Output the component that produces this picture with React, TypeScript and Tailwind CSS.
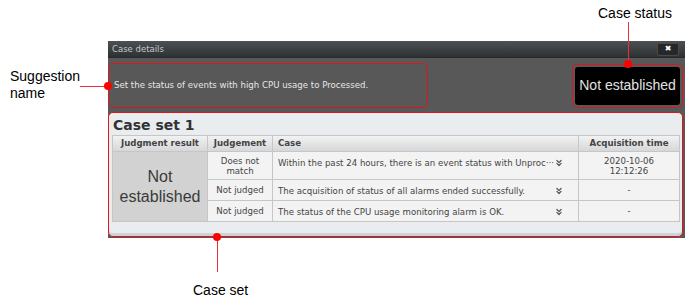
import React from "react"
import { ChevronsDown } from "lucide-react"

const rows = [
  { judge: ["Does not", "match"], text: "Within the past 24 hours, there is an event status with Unproc···", time: ["2020-10-06", "12:12:26"] },
  { judge: ["Not judged"], text: "The acquisition of status of all alarms ended successfully.", time: ["-"] },
  { judge: ["Not judged"], text: "The status of the CPU usage monitoring alarm is OK.", time: ["-"] },
]

function Dot({ className }: { className: string }) {
  return <div className={`absolute w-[8px] h-[8px] rounded-full bg-[#ff0000] ${className}`} />
}

export default function App() {
  return (
    <div className="relative w-[689px] h-[307px] bg-white overflow-hidden font-['DejaVu_Sans',sans-serif]">
      <div className="pt-[41px] pl-[108px]">
        {/* dialog */}
        <div className="w-[577px] bg-[#585858] pb-[1px]">
          <div className="h-[17px] flex items-center justify-between bg-gradient-to-b from-[#4d5154] to-[#2e3134] border-b border-[#2a2a2a]">
            <span className="pl-[4px] text-[8.5px] text-[#c3c7ca]">Case details</span>
            <div className="mr-[6px] w-[22px] h-[13px] rounded-[2px] bg-[#262728] border border-[#4a4a4a] flex items-center justify-center text-white text-[8px] leading-none">
              ✖
            </div>
          </div>

          <div className="flex items-center justify-between pt-[5px] pr-[2px] pb-[4px]">
            <div className="w-[320px] h-[45px] border border-[#e0141c] rounded-[5px] flex items-center pl-[5px]">
              <span className="text-[8.6px] text-[#e6e6e6]">Set the status of events with high CPU usage to Processed.</span>
            </div>
            <div className="w-[111px] h-[44px] border border-[#e0141c] rounded-[5px] p-[2px] flex">
              <div className="flex-1 bg-black rounded-[3px] flex items-center justify-center">
                <span className="text-[14px] text-[#e2e2e2] font-['Liberation_Sans',sans-serif]">Not established</span>
              </div>
            </div>
          </div>

          <div className="mr-[2px] h-[125px] bg-[#e9edf0] border border-[#e0141c] rounded-[5px] px-[3px] pt-[3px] shadow-[inset_0_-3px_0_#cfd3d6]">
            <div className="text-[14px] font-bold text-[#333] leading-[18px] pl-[1px]">Case set 1</div>
            <table className="mt-[1px] w-[567px] border-collapse text-[8.6px] text-[#444] table-fixed">
              <colgroup>
                <col className="w-[95px]" />
                <col className="w-[65px]" />
                <col className="w-[306px]" />
                <col className="w-[101px]" />
              </colgroup>
              <thead>
                <tr className="h-[16px] bg-gradient-to-b from-[#f2f2f2] to-[#d3d5d7] font-bold">
                  <th className="border border-[#c6c6c6] font-bold">Judgment result</th>
                  <th className="border border-[#c6c6c6] font-bold">Judgement</th>
                  <th className="border border-[#c6c6c6] font-bold text-left pl-[5px]">Case</th>
                  <th className="border border-[#c6c6c6] font-bold">Acquisition time</th>
                </tr>
              </thead>
              <tbody>
                {rows.map((r, i) => (
                  <tr key={i} className={i === 0 ? "h-[28px]" : "h-[21px]"}>
                    {i === 0 && (
                      <td rowSpan={3} className="border border-[#c6c6c6] bg-[#d2d2d2] text-center text-[16px] leading-[20px] text-[#3a3a3a] font-['Liberation_Sans',sans-serif]">
                        Not<br />established
                      </td>
                    )}
                    <td className="border border-[#c6c6c6] bg-[#f3f3f3] text-center leading-[10px]">
                      {r.judge.map((t) => <div key={t}>{t}</div>)}
                    </td>
                    <td className="border border-[#c6c6c6] bg-[#f3f3f3] pl-[5px] pr-[14px] align-top pt-[5px]">
                      <div className="flex items-center justify-between whitespace-nowrap">
                        <span>{r.text}</span>
                        <ChevronsDown size={10} strokeWidth={3} className="text-[#555] shrink-0" />
                      </div>
                    </td>
                    <td className="border border-[#c6c6c6] bg-[#f3f3f3] text-center leading-[10px]">
                      {r.time.map((t) => <div key={t}>{t}</div>)}
                    </td>
                  </tr>
                ))}
              </tbody>
            </table>
          </div>
        </div>
      </div>

      {/* annotations */}
      <div className="absolute left-[10px] top-[68px] text-[14px] leading-[17px] text-black font-['Liberation_Sans',sans-serif]">
        Suggestion<br />name
      </div>
      <div className="absolute left-[80px] top-[86px] w-[28px] h-[1px] bg-[#e8303a]" />
      <Dot className="left-[104px] top-[82px]" />

      <div className="absolute left-[598px] top-[5px] text-[14px] leading-[17px] text-black font-['Liberation_Sans',sans-serif]">
        Case status
      </div>
      <div className="absolute left-[628px] top-[22px] w-[1px] h-[42px] bg-[#e8303a]" />
      <Dot className="left-[624px] top-[60px]" />

      <div className="absolute left-[193px] top-[282px] text-[14px] leading-[17px] text-black font-['Liberation_Sans',sans-serif]">
        Case set
      </div>
      <div className="absolute left-[217px] top-[237px] w-[1px] h-[35px] bg-[#e8303a]" />
      <Dot className="left-[213px] top-[233px]" />
    </div>
  )
}
